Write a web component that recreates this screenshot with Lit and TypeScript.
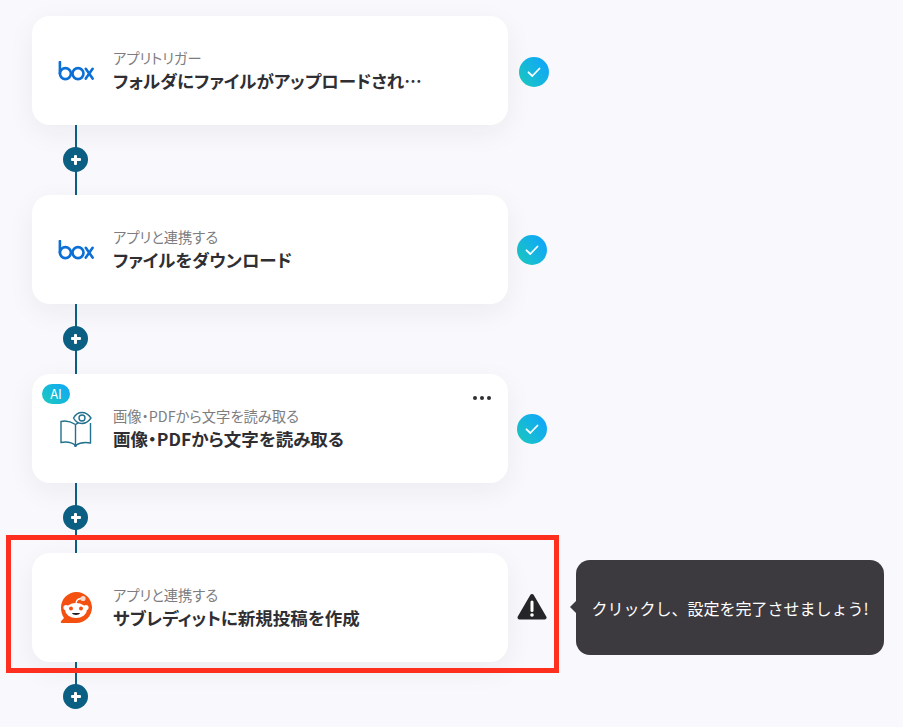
import { LitElement, html, css, svg } from 'lit';
import { customElement } from 'lit/decorators.js';

interface Step {
    icon: 'box' | 'book' | 'reddit';
    sub: string;
    title: string;
    status: 'done' | 'warn';
    ai?: boolean;
    checkShift?: boolean;
}

const STEPS: Step[] = [
    { icon: 'box', sub: 'アプリトリガー', title: 'フォルダにファイルがアップロードされたら', status: 'done', checkShift: true },
    { icon: 'box', sub: 'アプリと連携する', title: 'ファイルをダウンロード', status: 'done' },
    { icon: 'book', sub: '画像・PDFから文字を読み取る', title: '画像・PDFから文字を読み取る', status: 'done', ai: true },
    { icon: 'reddit', sub: 'アプリと連携する', title: 'サブレディットに新規投稿を作成', status: 'warn' },
];

const boxLogo = svg`
    <svg class="icon-box" viewBox="0 0 36 20" width="36" height="20" fill="none" stroke="#0b6fd6" stroke-width="2.600">
        <circle cx="7.400" cy="12.600" r="5.500" />
        <path d="M1.900 1v11.600" stroke-linecap="round" />
        <circle cx="20" cy="12.600" r="5.500" />
        <path d="M27.800 7.800l6.800 9.800M34.600 7.800l-6.800 9.800" stroke-linecap="round" />
    </svg>
`;

const bookIcon = svg`
    <svg class="icon-book" viewBox="0 0 32 36" width="32" height="36" fill="none" stroke="#23708f" stroke-width="1.400" stroke-linejoin="round">
        <path d="M15.500 34.500C12 31.500 6.500 30.500 1 31.500V10.500C5 9.500 10 10 15.500 13.500V34.500Z" />
        <path d="M15.500 34.500C19 32 25 31 30.500 32V12" />
        <path d="M15.500 13.500C16.500 12.800 17.500 12.300 18.500 12" />
        <path d="M13.500 7C15.500 3.400 18.500 1.500 22 1.500S28.500 3.400 31 7C28.500 10.600 25.500 12.500 22 12.500S15.500 10.600 13.500 7Z" fill="#fff" />
        <circle cx="22" cy="7" r="3" />
        <circle cx="15.500" cy="34.500" r="0.800" fill="#23708f" />
    </svg>
`;

const redditIcon = svg`
    <svg class="icon-reddit" viewBox="0 0 32 32" width="32" height="32">
        <path d="M16.500 0C25 0 32 7 32 15.500S25 31 16.500 31H1.800C.8 31 .4 30 1 29.300L4 26C2 23.300 1 19.500 1 15.500 1 7 8 0 16.500 0Z" fill="#f4500f" />
        <ellipse cx="16" cy="18.500" rx="10.800" ry="7.500" fill="#fff" />
        <circle cx="6" cy="15.500" r="2.600" fill="#fff" />
        <circle cx="26" cy="15.500" r="2.600" fill="#fff" />
        <path d="M16 11.500C16.300 8.500 17.500 6.800 21 6.500" stroke="#fff" stroke-width="1.300" fill="none" />
        <circle cx="23" cy="6.500" r="2.600" fill="#f3d9cf" />
        <circle cx="11" cy="16.500" r="2" fill="#f4500f" />
        <circle cx="21" cy="16.500" r="2" fill="#f4500f" />
        <path d="M11.800 21C13 23.500 19 23.500 20.200 21Z" fill="#222" />
    </svg>
`;

const checkBadge = svg`
    <svg viewBox="0 0 30 30" width="30" height="30">
        <defs>
            <linearGradient id="chk" x1="0" y1="1" x2="1" y2="0.300">
                <stop offset="0" stop-color="#1ccbbd" />
                <stop offset="1" stop-color="#10a6f8" />
            </linearGradient>
        </defs>
        <circle cx="15" cy="15" r="15" fill="url(#chk)" />
        <path d="M9.500 15.300l3.800 3.700 7.200-7.500" fill="none" stroke="#fff" stroke-width="1.800" stroke-linecap="round" stroke-linejoin="round" />
    </svg>
`;

const warnBadge = svg`
    <svg viewBox="0 0 30 28" width="30" height="28">
        <path d="M15 3L27.500 24.500H2.500Z" fill="#26262a" stroke="#26262a" stroke-width="4" stroke-linejoin="round" />
        <path d="M15 9v8.500" stroke="#fff" stroke-width="3" stroke-linecap="round" />
        <circle cx="15" cy="22" r="1.800" fill="#fff" />
    </svg>
`;

@customElement('app-root')
export class AppRoot extends LitElement {
    public static override styles = css`
        :host {
            display: block;
            position: relative;
            height: 727px;
            overflow: hidden;
            background: #f9f8fc;
            font-family: 'Noto Sans CJK JP', 'Noto Sans', sans-serif;
        }
        .flow {
            display: flex;
            flex-direction: column;
            padding: 16px 0 0 32px;
            font-feature-settings: 'palt';
        }
        .row {
            display: flex;
            align-items: center;
            position: relative;
        }
        .card {
            position: relative;
            box-sizing: border-box;
            width: 476px;
            height: 109px;
            display: flex;
            align-items: center;
            padding: 0 0 0 26px;
            gap: 19px;
            background: #fff;
            border-radius: 18px;
            box-shadow: 0 8px 28px rgba(40, 40, 70, 0.06);
        }
        .icon {
            width: 36px;
            flex: none;
            display: flex;
            justify-content: center;
        }
        .icon svg {
            display: block;
        }
        .text {
            min-width: 0;
            width: 312px;
        }
        .sub {
            font-size: 14.300px;
            line-height: 20px;
            color: #7d7d80;
            white-space: nowrap;
        }
        .title {
            font-size: 17.500px;
            line-height: 25px;
            font-weight: 700;
            color: #2f2f33;
            white-space: nowrap;
            overflow: hidden;
            text-overflow: ellipsis;
        }
        .ai {
            position: absolute;
            left: 10px;
            top: 10px;
            width: 28px;
            height: 20px;
            border-radius: 10px;
            background: linear-gradient(45deg, #1ccbbd, #10a6f8);
            color: #fff;
            font-size: 13px;
            line-height: 20px;
            text-align: center;
        }
        .more {
            position: absolute;
            right: 17px;
            top: 22px;
            display: flex;
            gap: 3px;
        }
        .more i {
            width: 4px;
            height: 4px;
            border-radius: 50%;
            background: #2f2f33;
        }
        .badge {
            margin-left: 9px;
            display: flex;
        }
        .badge.shift {
            margin-left: 11px;
            margin-top: 2px;
        }
        .badge.warn {
            margin-top: -1px;
        }
        .link {
            position: relative;
            width: 88px;
            height: 70px;
        }
        .link::before {
            content: '';
            position: absolute;
            left: 43px;
            top: 0;
            bottom: 0;
            width: 2px;
            background: #0b5f82;
        }
        .link.last::before {
            bottom: 24px;
        }
        .plus {
            position: absolute;
            left: 31px;
            top: 22px;
            width: 25px;
            height: 25px;
            border-radius: 50%;
            background: #0b5f82;
        }
        .plus::before,
        .plus::after {
            content: '';
            position: absolute;
            background: #fff;
            border-radius: 1px;
        }
        .plus::before {
            left: 7.500px;
            top: 11.250px;
            width: 10px;
            height: 2.500px;
        }
        .plus::after {
            left: 11.250px;
            top: 7.500px;
            width: 2.500px;
            height: 10px;
        }
        .tooltip {
            position: absolute;
            left: 576px;
            top: 560px;
            box-sizing: border-box;
            width: 308px;
            height: 95px;
            display: flex;
            align-items: center;
            justify-content: center;
            background: #3c3a3f;
            border-radius: 14px;
            color: #fff;
            font-size: 16px;
            white-space: nowrap;
        }
        .tooltip::before {
            content: '';
            position: absolute;
            left: -6px;
            top: 41px;
            border-style: solid;
            border-width: 6px 6px 6px 0;
            border-color: transparent #3c3a3f transparent transparent;
        }
        .highlight {
            position: absolute;
            left: 6px;
            top: 535px;
            box-sizing: border-box;
            width: 553px;
            height: 138px;
            border: 5px solid #ff2f1f;
            pointer-events: none;
        }
    `;

    private _renderIcon(icon: Step['icon']) {
        if (icon === 'box') return boxLogo;
        if (icon === 'book') return bookIcon;
        return redditIcon;
    }

    private _renderBadge(step: Step) {
        if (step.status === 'warn') return html`<div class="badge warn">${warnBadge}</div>`;
        return html`<div class="badge ${step.checkShift ? 'shift' : ''}">${checkBadge}</div>`;
    }

    override render() {
        return html`
            <div class="flow">
                ${STEPS.map(
                    (step, i) => html`
                        <div class="row">
                            <div class="card">
                                ${step.ai ? html`<span class="ai">AI</span>` : null}
                                ${step.ai ? html`<div class="more"><i></i><i></i><i></i></div>` : null}
                                <div class="icon">${this._renderIcon(step.icon)}</div>
                                <div class="text">
                                    <div class="sub">${step.sub}</div>
                                    <div class="title">${step.title}</div>
                                </div>
                            </div>
                            ${this._renderBadge(step)}
                        </div>
                        <div class="link ${i === STEPS.length - 1 ? 'last' : ''}"><span class="plus"></span></div>
                    `,
                )}
            </div>
            <div class="highlight"></div>
            <div class="tooltip">クリックし、設定を完了させましょう!</div>
        `;
    }
}
